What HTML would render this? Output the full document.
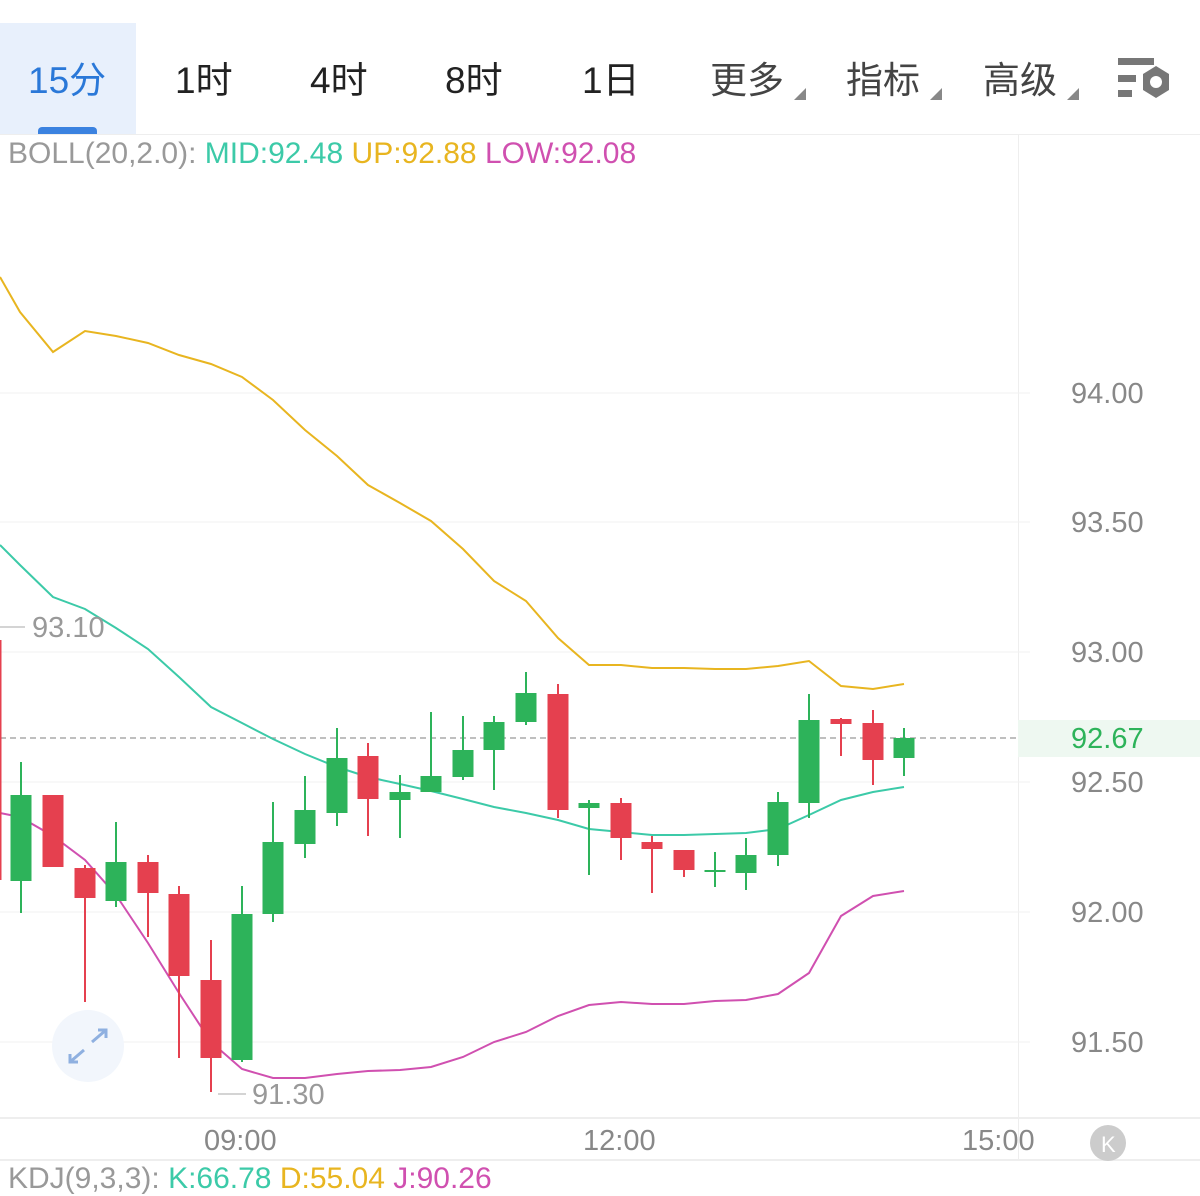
<!DOCTYPE html><html><head><meta charset="utf-8"><style>
body{margin:0;width:1200px;height:1186px;overflow:hidden;background:#fff;font-family:"Liberation Sans","Noto Sans CJK SC",sans-serif;position:relative}
.t{position:absolute;top:50px;font-size:37px;color:#222}
.ax{position:absolute;font-size:29px;color:#888}
</style></head><body>
<div style="position:absolute;left:0;top:23px;width:136px;height:111px;background:#e8f0fc"></div>
<div style="position:absolute;left:38px;top:127px;width:59px;height:8px;background:#3b82e0;border-radius:4px 4px 0 0"></div>
<div class="t" style="left:28px;color:#2a78d8">15分</div>
<div class="t" style="left:175px">1时</div>
<div class="t" style="left:310px">4时</div>
<div class="t" style="left:445px">8时</div>
<div class="t" style="left:582px">1日</div>
<div class="t" style="left:710px;color:#444">更多</div>
<div class="t" style="left:846px;color:#444">指标</div>
<div class="t" style="left:983px;color:#444">高级</div>
<svg style="position:absolute;left:0;top:0" width="1200" height="1186">
<polygon points="806,88 806,100 794,100" fill="#888"/><polygon points="942,88 942,100 930,100" fill="#888"/><polygon points="1079,88 1079,100 1067,100" fill="#888"/>
<g fill="#777"><rect x="1118" y="58" width="36" height="7"/><rect x="1118" y="75" width="18" height="7"/><rect x="1118" y="90" width="14" height="7"/></g>
<polygon points="1156,66 1169,74 1169,90 1156,98 1143,90 1143,74" fill="#777"/><circle cx="1156" cy="82" r="6" fill="#fff"/>
<line x1="0" y1="134.5" x2="1200" y2="134.5" stroke="#eee"/>
<line x1="1018.5" y1="135" x2="1018.5" y2="1160" stroke="#eee"/>
<g stroke="#f2f2f2"><line x1="0" y1="393" x2="1030" y2="393"/><line x1="0" y1="522" x2="1030" y2="522"/><line x1="0" y1="652" x2="1030" y2="652"/><line x1="0" y1="782" x2="1030" y2="782"/><line x1="0" y1="912" x2="1030" y2="912"/><line x1="0" y1="1042" x2="1030" y2="1042"/></g>
<line x1="0" y1="1118" x2="1200" y2="1118" stroke="#eee" stroke-width="2"/><line x1="0" y1="1160" x2="1200" y2="1160" stroke="#eee" stroke-width="2"/>
<rect x="1018" y="720" width="182" height="37" fill="#eef8f1"/>
<line x1="0" y1="738" x2="1018" y2="738" stroke="#aaa" stroke-dasharray="6,4" stroke-width="1.5"/>
<polyline fill="none" stroke="#e8b520" stroke-width="2" points="0,277 20,312 53,352 85,331 116,336 148,343 179,355 211,364 242,377 273,400 305,430 337,456 368,485 400,503 431,521 463,549 494,581 526,601 558,638 589,665 621,665 652,668 684,668 715,669 746,669 778,666 809,661 841,686 873,689 904,684"/>
<polyline fill="none" stroke="#3ccaa8" stroke-width="2" points="0,545 20,565 53,597 85,609 116,628 148,649 179,677 211,707 242,723 273,739 305,754 337,767 368,777 400,784 431,791 463,799 494,807 526,813 558,820 589,829 621,832 652,835 684,835 715,834 746,833 778,829 809,815 841,800 873,792 904,787"/>
<polyline fill="none" stroke="#d050b0" stroke-width="2" points="0,813 20,817 53,836 85,860 116,895 148,943 179,993 211,1042 242,1069 273,1078 305,1078 337,1074 368,1071 400,1070 431,1067 463,1057 494,1042 526,1032 558,1016 589,1005 621,1002 652,1004 684,1004 715,1001 746,1000 778,994 809,973 841,916 873,896 904,891"/>
<g id="c"></g>
<line x1="0" y1="640" x2="0" y2="880" stroke="#e5404f" stroke-width="3"/>
<line x1="0" y1="627" x2="25" y2="627" stroke="#aaa"/><line x1="218" y1="1094" x2="246" y2="1094" stroke="#aaa"/>
<circle cx="88" cy="1046" r="36" fill="#f2f6fc"/>
<g stroke="#8fb0e0" stroke-width="3" fill="none"><path d="M92,1042 L106,1030 M98,1030 L106,1030 L106,1038 M84,1050 L70,1062 M70,1054 L70,1062 L78,1062"/></g>
<circle cx="1108" cy="1143" r="18" fill="#ccc"/><text x="1101" y="1152" font-size="22" fill="#fff" font-family="Liberation Sans">K</text>
</svg>
<script>
var d=[[21,'g',795,881,762,913],[53,'r',795,867,795,867],[85,'r',868,898,865,1002],[116,'g',862,901,822,907],[148,'r',862,893,855,937],[179,'r',894,976,886,1058],[211,'r',980,1058,940,1092],[242,'g',914,1060,886,1062],[273,'g',842,914,802,922],[305,'g',810,844,776,858],[337,'g',758,813,728,826],[368,'r',756,799,743,836],[400,'g',792,800,775,838],[431,'g',776,792,712,792],[463,'g',750,777,716,780],[494,'g',722,750,716,790],[526,'g',693,722,672,725],[558,'r',694,810,684,818],[589,'g',803,808,800,875],[621,'r',803,838,798,860],[652,'r',842,849,836,893],[684,'r',850,870,850,877],[715,'g',870,872,852,887],[746,'g',855,873,838,890],[778,'g',802,855,792,866],[809,'g',720,803,694,818],[841,'r',719,724,718,756],[873,'r',723,760,710,785],[904,'g',738,758,728,776]];
var s='';d.forEach(function(c){var col=c[1]=='g'?'#2db35a':'#e5404f';s+='<line x1="'+c[0]+'" y1="'+c[4]+'" x2="'+c[0]+'" y2="'+c[5]+'" stroke="'+col+'" stroke-width="2"/><rect x="'+(c[0]-10.5)+'" y="'+c[2]+'" width="21" height="'+Math.max(2,c[3]-c[2])+'" fill="'+col+'"/>';});
document.getElementById('c').innerHTML=s;
</script>
<div style="position:absolute;left:8px;top:137px;font-size:30px;color:#999;white-space:nowrap">BOLL(20,2.0): <span style="color:#3ccaa8">MID:92.48</span> <span style="color:#e8b520">UP:92.88</span> <span style="color:#d050b0">LOW:92.08</span></div>
<div class="ax" style="left:1071px;top:378px">94.00</div>
<div class="ax" style="left:1071px;top:507px">93.50</div>
<div class="ax" style="left:1071px;top:637px">93.00</div>
<div class="ax" style="left:1071px;top:723px;color:#2db35a">92.67</div>
<div class="ax" style="left:1071px;top:767px">92.50</div>
<div class="ax" style="left:1071px;top:897px">92.00</div>
<div class="ax" style="left:1071px;top:1027px">91.50</div>
<div class="ax" style="left:32px;top:612px;color:#999">93.10</div>
<div class="ax" style="left:252px;top:1079px;color:#999">91.30</div>
<div class="ax" style="left:204px;top:1125px">09:00</div>
<div class="ax" style="left:583px;top:1125px">12:00</div>
<div class="ax" style="left:962px;top:1125px">15:00</div>
<div style="position:absolute;left:8px;top:1162px;font-size:30px;color:#999;white-space:nowrap">KDJ(9,3,3): <span style="color:#3ccaa8">K:66.78</span> <span style="color:#e8b520">D:55.04</span> <span style="color:#d050b0">J:90.26</span></div>
</body></html>
